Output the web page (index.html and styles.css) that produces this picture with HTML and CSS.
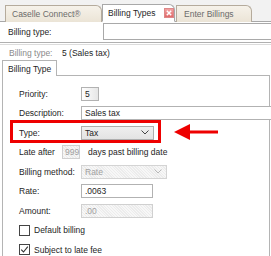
FILE: index.html
```html
<!DOCTYPE html>
<html>
<head>
<meta charset="utf-8">
<link rel="stylesheet" href="styles.css">
</head>
<body>
<div class="screen">
  <div class="tabstrip">
    <div class="tab tab-caselle">Caselle Connect®</div>
    <div class="tab tab-active">Billing Types<span class="close"><svg width="8" height="8" viewBox="0 0 8 8"><path d="M1.8 1.8 L6.2 6.2 M6.2 1.8 L1.8 6.2" stroke="#fff" stroke-width="1.5"/></svg></span></div>
    <div class="tab tab-enter">Enter Billings</div>
  </div>
  <div class="search">
    <span class="search-label">Billing type:</span>
    <div class="search-input"></div>
  </div>
  <div class="sep"></div>
  <div class="current">
    <span class="current-label">Billing type:</span>
    <span class="current-value">5 (Sales tax)</span>
  </div>
  <div class="ptabs"><div class="ptab">Billing Type</div></div>
  <div class="panel">
    <div class="row"><span class="lbl">Priority:</span><div class="field f-priority">5</div></div>
    <div class="row"><span class="lbl">Description:</span><div class="field f-desc">Sales tax</div></div>
    <div class="row"><span class="lbl">Type:</span><div class="select f-type">Tax<span class="chev"><svg width="8" height="5" viewBox="0 0 8 5"><path d="M0.5 0.5 L4 4 L7.5 0.5" fill="none" stroke="#444" stroke-width="1"/></svg></span></div></div>
    <div class="row"><span class="lbl-late">Late after</span><div class="field disabled f-late">999</div><span class="after">days past billing date</span></div>
    <div class="row"><span class="lbl">Billing method:</span><div class="select disabled f-method">Rate<span class="chev"><svg width="8" height="5" viewBox="0 0 8 5"><path d="M0.5 0.5 L4 4 L7.5 0.5" fill="none" stroke="#b8b8b8" stroke-width="1"/></svg></span></div></div>
    <div class="row"><span class="lbl">Rate:</span><div class="field f-rate">.0063</div></div>
    <div class="row"><span class="lbl">Amount:</span><div class="field disabled f-rate">.00</div></div>
    <div class="row"><span class="check"></span><span class="check-text">Default billing</span></div>
    <div class="row"><span class="check"><svg width="9" height="9" viewBox="0 0 9 9"><path d="M1.2 4.6 L3.5 7 L7.8 1.6" fill="none" stroke="#333" stroke-width="1.1"/></svg></span><span class="check-text">Subject to late fee</span></div>
  </div>
  <div class="highlight"></div>
  <svg class="arrow" width="44" height="18" viewBox="0 0 44 18"><path d="M0 9 L16 1 L16 7.5 L44 7.5 L44 10.5 L16 10.5 L16 17 Z" fill="#ee0000"/></svg>
</div>
</body>
</html>
```

FILE: styles.css
```css
* { box-sizing: border-box; }
html, body { margin: 0; padding: 0; }
body {
  width: 271px;
  height: 256px;
  overflow: hidden;
  background: #fff;
  font-family: "Liberation Sans", Arial, sans-serif;
  font-size: 8.5px;
  color: #1e1e1e;
}
.screen {
  position: relative;
  width: 271px;
  height: 256px;
  overflow: hidden;
}
.tabstrip {
  height: 22px;
  background: #f2f2f2;
  border-bottom: 1px solid #a8a8a8;
  display: flex;
  align-items: flex-end;
  padding-left: 5px;
}
.tab {
  height: 17px;
  margin-bottom: -1px;
  border: 1px solid #b5ab9c;
  border-bottom: none;
  border-radius: 0 6px 0 0;
  background: linear-gradient(#f6f2ea, #ebe4d6);
  color: #6b6b6b;
  display: flex;
  align-items: center;
  padding-left: 6px;
  white-space: nowrap;
  flex: none;
}
.tab-caselle { width: 97px; }
.tab-active {
  width: 73px;
  height: 18px;
  background: #fff;
  border-color: #a8a8a8;
  color: #1e1e1e;
  border-bottom: 1px solid #fff;
  padding-left: 5px;
}
.tab-enter { width: 76px; margin-left: 1px; padding-left: 7px; }
.close {
  margin-left: 8px;
  width: 10px;
  height: 10px;
  background: linear-gradient(#f3a0a0, #e06a6a);
  border: 1px solid #d88;
  display: flex;
  align-items: center;
  justify-content: center;
  flex: none;
}
.close svg { display: block; }
.search {
  height: 20px;
  display: flex;
  align-items: center;
  padding-left: 8px;
  background: #fff;
}
.search-label { width: 95px; flex: none; }
.search-input {
  flex: 1;
  height: 17px;
  margin-top: -1px;
  border: 1px solid #a9a9a9;
  border-right: none;
  background: #fff;
}
.sep {
  height: 3px;
  border-top: 1px solid #b0b0b0;
  border-bottom: 1px solid #dcdcdc;
}
.current {
  height: 15px;
  display: flex;
  align-items: center;
  padding-left: 9px;
}
.current-label { width: 53px; flex: none; color: #8a8a8a; }
.ptabs {
  height: 15px;
  display: flex;
  padding-left: 2px;
}
.ptab {
  width: 55px;
  height: 16px;
  border: 1px solid #b4b4b4;
  border-bottom: none;
  background: #fff;
  display: flex;
  align-items: center;
  padding-left: 5px;
  position: relative;
  z-index: 1;
  margin-bottom: -1px;
}
.panel {
  margin-left: 2px;
  width: 268px;
  height: 182px;
  border: 1px solid #b4b4b4;
  padding-top: 8px;
  padding-left: 16px;
  display: flex;
  flex-direction: column;
}
.row {
  height: 19.5px;
  flex: none;
  display: flex;
  align-items: center;
  white-space: nowrap;
}
.row > * { flex: none; }
.lbl { width: 62px; }
.lbl-late { width: 43px; }
.after { margin-left: 8px; }
.field, .select {
  height: 14px;
  border: 1px solid #b2b2b2;
  background: #fff;
  display: flex;
  align-items: center;
  padding-left: 3px;
}
.f-priority { width: 18px; background: linear-gradient(90deg, #fff, #e6e6e6); }
.f-desc { width: 215px; border-right: none; }
.f-type { width: 73px; }
.f-late { width: 18px; padding-left: 2px; }
.f-method { width: 86px; }
.f-rate { width: 72px; }
.select {
  background: linear-gradient(#efefef, #e3e3e3);
  border-color: #adadad;
  justify-content: space-between;
  padding-right: 4px;
}
.chev { display: flex; }
.disabled {
  background-color: #f3f3f3;
  background-image: repeating-linear-gradient(45deg, #f7f7f7 0 1px, #ececec 1px 2px);
  border-color: #d0d0d0;
  color: #a0a0a0;
}
.select.disabled { border-color: #d4d4d4; }
.check {
  width: 11px;
  height: 11px;
  border: 1px solid #444;
  background: #fff;
  display: flex;
  align-items: center;
  justify-content: center;
  margin-right: 4px;
}
.check svg { display: block; }
.highlight {
  position: absolute;
  left: 10px;
  top: 120px;
  width: 151px;
  height: 23px;
  border: 3px solid #ee0000;
}
.arrow {
  position: absolute;
  left: 174px;
  top: 123px;
}
```
